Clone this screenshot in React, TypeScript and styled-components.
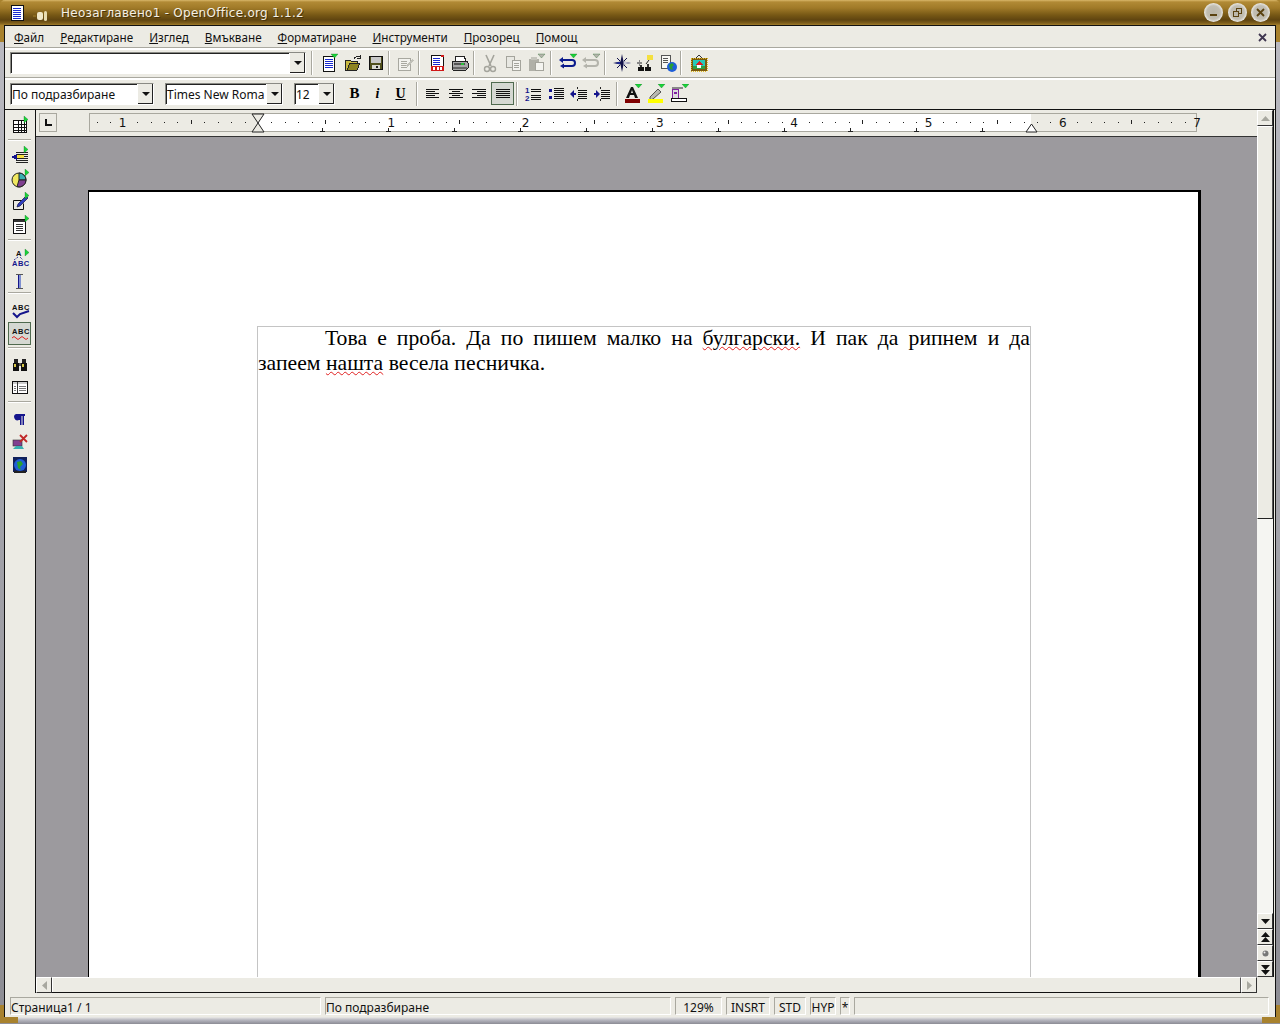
import * as React from "react";
import styled, { createGlobalStyle } from "styled-components";

const GlobalStyle = createGlobalStyle`
	html, body {
		margin: 0;
		padding: 0;
		background: #fff;
	}
	body {
		font-family: "Noto Sans", sans-serif;
		font-size: 12px;
		color: #111;
	}
`;

const FACE = "#ecebe4";
const ETCH = "#a9a89f";

const Frame = styled.div`
	width: 1280px;
	height: 1024px;
	overflow: hidden;
	position: relative;
	display: flex;
	flex-direction: column;
	background: linear-gradient(to bottom, #a8822e 0, #a8822e 42px, #b9b9c0 42px, #8d8d94 1005px, #a8822e 1005px);
`;

const TitleBar = styled.div`
	height: 25px;
	flex: none;
	display: flex;
	align-items: center;
	padding: 0 10px 0 11px;
	border-radius: 5px 5px 0 0;
	background: linear-gradient(
		to bottom,
		#d8b76a 0,
		#b18a35 2px,
		#a07a28 8px,
		#775815 15px,
		#5f4410 20px,
		#7d5e1c 23px,
		#a07c2a 25px
	);
`;

const TitleIcon = styled.span`
	width: 14px;
	height: 18px;
	display: block;
`;

const Shade = styled.span`
	width: 15px;
	height: 10px;
	margin: 0 13px 0 8px;
	display: block;
`;

const TitleText = styled.span`
	flex: 1;
	font-family: "DejaVu Sans", sans-serif;
	color: #f4f0e4;
	font-size: 12px;
	letter-spacing: 0.27px;
	text-shadow: 1px 1px 0 #4a340a;
`;

const WinButton = styled.span`
	width: 19px;
	height: 19px;
	margin-left: 4.5px;
	border-radius: 50%;
	background: radial-gradient(circle at 50% 50%, #b9b5a8 0, #c2beb2 50%, #e9e8e4 70%, #f2f2f0 85%, #a8a498 100%);
	display: flex;
	align-items: center;
	justify-content: center;
`;

const Client = styled.div`
	flex: 1;
	min-height: 0;
	margin: 0 4px 7px 4px;
	background: ${FACE};
	border: 1px solid #111;
	border-bottom: 0;
	display: flex;
	flex-direction: column;
`;

const MenuBar = styled.div`
	height: 24px;
	box-sizing: border-box;
	flex: none;
	display: flex;
	align-items: center;
	gap: 16px;
	padding: 0 8px 0 9px;
	border-bottom: 2px solid #fff;
	box-shadow: inset 0 -1px 0 ${ETCH};
`;

const MenuItem = styled.span`
	display: inline-block;
	font-size: 11.7px;
	&::first-letter {
		text-decoration: underline;
	}
`;

const MenuClose = styled.span`
	margin-left: auto;
	display: flex;
	width: 9px;
	height: 9px;
`;

const Toolbar = styled.div<{ $pb: number }>`
	height: 30px;
	box-sizing: border-box;
	flex: none;
	display: flex;
	align-items: center;
	padding: 0 0 ${p => p.$pb}px 5px;
	border-bottom: 2px solid #fff;
	box-shadow: inset 0 -1px 0 ${ETCH};
`;

const FormatBar = styled(Toolbar)`
	border-bottom: 1px solid #111;
	box-shadow: none;
`;

const Combo = styled.div<{ $w: number; $ml?: number }>`
	width: ${p => p.$w}px;
	height: 22px;
	margin-left: ${p => p.$ml || 0}px;
	box-sizing: border-box;
	flex: none;
	display: flex;
	background: #fff;
	border: 1px solid;
	border-color: #8a8a84 #fff #fff #8a8a84;
	box-shadow: inset 1px 1px 0 #222;
	font-size: 12px;
	line-height: 21px;
`;

const ComboText = styled.span`
	flex: 1;
	min-width: 0;
	padding-left: 1px;
	white-space: nowrap;
`;

const ComboButton = styled.span`
	width: 15px;
	flex: none;
	display: flex;
	align-items: center;
	justify-content: center;
	background: ${FACE};
	border-left: 1px solid #fff;
	box-shadow: inset -1px -1px 0 #222;
`;

const ArrowDown = styled.span`
	width: 0;
	height: 0;
	border-left: 4px solid transparent;
	border-right: 4px solid transparent;
	border-top: 4px solid #111;
`;

const Sep = styled.span<{ $l: number; $r: number }>`
	width: 1px;
	height: 24px;
	flex: none;
	background: ${ETCH};
	border-right: 1px solid #fff;
	margin: 0 ${p => p.$r}px 0 ${p => p.$l}px;
`;

const IconBtn = styled.span<{ $active?: boolean; $ml?: number }>`
	width: 23px;
	height: 23px;
	flex: none;
	box-sizing: border-box;
	display: flex;
	align-items: center;
	justify-content: center;
	margin-left: ${p => p.$ml || 0}px;
	${p => p.$active && `
		background: #d5d8d2;
		border: 1px solid #4f6a4f;
	`}
`;

const FormatLetter = styled.span<{ $bold?: boolean; $italic?: boolean; $under?: boolean }>`
	font-family: "Liberation Serif", serif;
	font-size: ${p => (p.$bold ? 15 : 14)}px;
	font-weight: bold;
	font-style: ${p => (p.$italic ? "italic" : "normal")};
	text-decoration: ${p => (p.$under ? "underline" : "none")};
	color: #000;
`;

const Main = styled.div`
	flex: 1;
	min-height: 0;
	display: flex;
`;

const SideBar = styled.div`
	width: 31px;
	flex: none;
	box-sizing: border-box;
	border-right: 1px solid #111;
	padding: 3px 0 0 3px;
	display: flex;
	flex-direction: column;
`;

const SideSep = styled.span<{ $t: number; $b: number }>`
	width: 23px;
	height: 1px;
	flex: none;
	background: ${ETCH};
	border-bottom: 1px solid #fff;
	margin: ${p => p.$t}px 0 ${p => p.$b}px 0;
`;

const DocArea = styled.div`
	flex: 1;
	min-width: 0;
	display: grid;
	grid-template-columns: 1221px 17px;
	grid-template-rows: 867px 16px;
`;

const DocColumn = styled.div`
	display: flex;
	flex-direction: column;
	min-height: 0;
`;

const RulerRow = styled.div`
	height: 27px;
	flex: none;
	display: flex;
	align-items: flex-start;
	padding: 3px 0 0 3px;
	box-sizing: border-box;
	border-bottom: 1px solid #333;
`;

const TabCorner = styled.span`
	width: 18px;
	height: 19px;
	flex: none;
	box-sizing: border-box;
	border: 1px solid ${ETCH};
	margin-right: 32px;
	display: flex;
	align-items: center;
	justify-content: center;
`;

const Scale = styled.div`
	position: relative;
	width: 1108px;
	height: 19px;
	box-sizing: border-box;
	border: 1px solid ${ETCH};
	background: linear-gradient(to right, ${FACE} 167px, #fff 167px, #fff 941px, ${FACE} 941px);
`;

const Dot = styled.span`
	position: absolute;
	top: 8px;
	width: 1px;
	height: 1px;
	background: #222;
`;

const HalfTick = styled.span`
	position: absolute;
	top: 6px;
	width: 1px;
	height: 4px;
	background: #222;
`;

const TabStop = styled.span`
	position: absolute;
	bottom: -1px;
	width: 5px;
	height: 4px;
	margin-left: -2px;
	background: linear-gradient(#222, #222) center top / 1px 100% no-repeat, linear-gradient(#222, #222) bottom / 100% 1px no-repeat;
`;

const RulerNumber = styled.span`
	position: absolute;
	top: 2px;
	width: 16px;
	margin-left: -9px;
	text-align: center;
	font-family: "DejaVu Sans", sans-serif;
	font-size: 12px;
	line-height: 15px;
`;

const Marker = styled.svg<{ $x: number }>`
	position: absolute;
	left: ${p => p.$x}px;
	top: -1px;
`;

const Workspace = styled.div`
	flex: 1;
	min-height: 0;
	background: #9c9a9e;
	padding: 53px 56px 0 52px;
	display: flex;
	flex-direction: column;
`;

const Page = styled.div`
	flex: 1;
	min-height: 0;
	background: #fff;
	border-top: 2px solid #000;
	border-left: 1px solid #000;
	border-right: 3px solid #000;
	padding: 134px 167px 0 168px;
	display: flex;
	flex-direction: column;
`;

const TextFrame = styled.div`
	flex: 1;
	border: 1px solid #c4c4c4;
	border-bottom: 0;
	font-family: "Liberation Serif", serif;
	font-size: 21.7px;
	line-height: 23px;
	color: #000;
	display: flex;
	flex-direction: column;
	gap: 2px;
`;

const LineOne = styled.div`
	text-align: justify;
	text-align-last: justify;
	text-indent: 67px;
	white-space: nowrap;
`;

const LineTwo = styled.div`
	white-space: nowrap;
`;

const Misspelt = styled.span`
	text-decoration: underline wavy #e02020 1px;
	text-underline-offset: 1px;
`;

const HScroll = styled.div`
	grid-column: 1;
	height: 16px;
	display: flex;
	box-sizing: border-box;
	border-bottom: 1px solid #111;
`;

const ScrollBtn = styled.span<{ $w?: number }>`
	width: ${p => p.$w || 16}px;
	height: 16px;
	flex: none;
	box-sizing: border-box;
	display: flex;
	align-items: center;
	justify-content: center;
	background: ${FACE};
	border-top: 1px solid #fff;
	border-left: 1px solid #fff;
	border-right: 1px solid #333;
	border-bottom: 1px solid #333;
`;

const HThumb = styled.span`
	flex: 1;
	box-sizing: border-box;
	background: ${FACE};
	border-top: 1px solid #fff;
	border-left: 1px solid #fff;
	border-right: 1px solid #555;
`;

const VScroll = styled.div`
	grid-column: 2;
	grid-row: 1;
	display: flex;
	flex-direction: column;
	background: #f5f5f2;
	border-right: 1px solid #111;
	box-sizing: border-box;
`;

const VThumb = styled.span`
	height: 393px;
	flex: none;
	box-sizing: border-box;
	background: ${FACE};
	border-top: 1px solid #fff;
	border-left: 1px solid #fff;
	border-bottom: 1px solid #222;
	border-right: 1px solid #555;
`;

const VTrack = styled.span`
	flex: 1;
`;

const StatusBar = styled.div`
	height: 24px;
	flex: none;
	box-sizing: border-box;
	display: flex;
	align-items: flex-start;
	gap: 4px;
	padding: 4px 6px 0 5px;
`;

const StatusCell = styled.span<{ $w?: number }>`
	flex: ${p => (p.$w ? `0 0 ${p.$w}px` : "1")};
	height: 18px;
	box-sizing: border-box;
	border: 1px solid;
	border-color: ${ETCH} #fff #fff ${ETCH};
	font-size: 12px;
	line-height: 19px;
	white-space: nowrap;
`;

const CenterCell = styled(StatusCell)`
	text-align: center;
`;

const BottomEdge = styled.div`
	position: absolute;
	left: 0;
	right: 0;
	bottom: 0;
	height: 7px;
	background: linear-gradient(to bottom, #ecebe8, #b7b7c0 3px, #8b8b94);
`;

const Corner = styled.span<{ $side: "left" | "right" }>`
	position: absolute;
	${p => p.$side}: 0;
	bottom: 1px;
	width: 18px;
	height: 6px;
	background: #a8822e;
`;

// --- icons ---

const Ico: React.FC<{ children: React.ReactNode; w?: number; h?: number; crisp?: boolean }> = ({ children, w = 20, h = 20, crisp = true }) => (
	<svg width={w} height={h} viewBox={`0 0 ${w} ${h}`} shapeRendering={crisp ? "crispEdges" : "auto"}>
		{children}
	</svg>
);

const TriDown = ({ x = 13, y = 1, c = "#19d43a" }: { x?: number; y?: number; c?: string }) => (
	<polygon points={`${x},${y} ${x + 7},${y} ${x + 3.5},${y + 4}`} fill={c} stroke="#0a5a12" strokeWidth="0.3" shapeRendering="auto" />
);

const TriRight = ({ x = 15, y = 1 }: { x?: number; y?: number }) => (
	<polygon points={`${x},${y} ${x + 4},${y + 3.5} ${x},${y + 7}`} fill="#19d43a" stroke="#0a5a12" strokeWidth="0.3" shapeRendering="auto" />
);

const Lines = ({ x, y, w, n, step = 2, c = "#111" }: { x: number; y: number; w: number; n: number; step?: number; c?: string }) => (
	<>
		{Array.from({ length: n }, (_, i) => (
			<rect key={i} x={x} y={y + i * step} width={w} height={1} fill={c} />
		))}
	</>
);

const NewIcon = () => (
	<Ico>
		<rect x="3.5" y="3.5" width="11" height="15" fill="#fff" stroke="#111" />
		<Lines x={5} y={6} w={8} n={5} step={2} c="#1a2ad0" />
		<TriDown x={11} y={1} />
	</Ico>
);

const OpenIcon = () => (
	<Ico>
		<path d="M2 7h5l1 1h6v2h3l-3 7H2z" fill="#c8b840" stroke="#222" />
		<path d="M4 17l3-7h10l-3 7z" fill="#8d8320" stroke="#222" />
		<path d="M11 6c1-3 4-3 6-2M17 2v3h-3" fill="none" stroke="#222" />
	</Ico>
);

const SaveIcon = () => (
	<Ico>
		<rect x="3.5" y="3.5" width="13" height="13" fill="#50501c" stroke="#111" />
		<rect x="5" y="4" width="10" height="6" fill="#c8c8c8" />
		<rect x="6" y="12" width="8" height="4" fill="#d8d8d0" />
		<rect x="10" y="13" width="2" height="2" fill="#222" />
	</Ico>
);

const EditIcon = () => (
	<Ico>
		<rect x="3.5" y="5.5" width="12" height="12" fill="#f2f2ee" stroke="#a8a8a0" />
		<Lines x={6} y={8} w={6} n={4} step={2} c="#a8a8a0" />
		<path d="M11 13l6-7 2 1-6 7z" fill="#c0c0b8" />
	</Ico>
);

const PdfIcon = () => (
	<Ico>
		<rect x="4.5" y="2.5" width="12" height="15" fill="#fff" stroke="#111" />
		<Lines x={6} y={5} w={7} n={4} step={2} c="#1a2ad0" />
		<rect x="4" y="13" width="13" height="5" fill="#d01818" />
		<rect x="6" y="14" width="2" height="3" fill="#fff" />
		<rect x="9.5" y="14" width="2" height="3" fill="#fff" />
		<rect x="13" y="14" width="2" height="3" fill="#fff" />
		<rect x="14" y="2" width="3" height="2" fill="#d01818" />
	</Ico>
);

const PrintIcon = () => (
	<Ico>
		<path d="M5 3h9l2 5H5z" fill="#fff" stroke="#222" />
		<path d="M2 8h15l1 2v5l-2 2H3l-1-2z" fill="#a8a8a8" stroke="#222" />
		<rect x="4" y="10" width="11" height="2" fill="#555" />
		<rect x="11" y="10" width="3" height="2" fill="#2bbf3a" />
		<rect x="3" y="14" width="14" height="2" fill="#666" />
	</Ico>
);

const CutIcon = () => (
	<Ico crisp={false}>
		<path d="M6 2l5 11M14 2L9 13" stroke="#a4a49c" strokeWidth="1.6" fill="none" />
		<circle cx="7" cy="16" r="2.5" fill="none" stroke="#a4a49c" strokeWidth="1.4" />
		<circle cx="13" cy="16" r="2.5" fill="none" stroke="#a4a49c" strokeWidth="1.4" />
	</Ico>
);

const CopyIcon = () => (
	<Ico>
		<rect x="3.5" y="3.5" width="8" height="11" fill="#e8e8e2" stroke="#a4a49c" />
		<rect x="9.5" y="7.5" width="8" height="10" fill="#f4f4f0" stroke="#a4a49c" />
		<Lines x={11} y={10} w={5} n={3} step={2} c="#a4a49c" />
	</Ico>
);

const PasteIcon = () => (
	<Ico>
		<path d="M3 6h10v12H3z" fill="#b0b0a8" />
		<rect x="5" y="4" width="6" height="3" fill="#c4c4bc" />
		<rect x="9.5" y="9.5" width="8" height="8" fill="#f4f4f0" stroke="#a4a49c" />
		<TriDown x={12} y={1} c="#b4b4ac" />
	</Ico>
);

const NavArrows = ({ c, tri }: { c: string; tri: string }) => (
	<Ico crisp={false}>
		<path d="M3 7h11a2.5 2.5 0 0 1 0 6H5" fill="none" stroke={c} strokeWidth="2" />
		<polygon points="1,7 5,4 5,10" fill={c} />
		<polygon points="2,13 6,10.5 6,15.5" fill={c} />
		<TriDown x={12} y={1} c={tri} />
	</Ico>
);

const NavigatorIcon = () => (
	<Ico crisp={false}>
		<path d="M10 1l1.5 7.5L19 10l-7.5 1.5L10 19l-1.5-7.5L1 10l7.5-1.5z" fill="#12124a" />
		<path d="M11.5 8.5L19 10l-7.5 1.5z" fill="#c8c8d8" />
		<path d="M3 10l5-1v2z" fill="#2030b0" />
		<path d="M5 5l3 3M15 15l-3-3M15 5l-3 3M5 15l3-3" stroke="#12124a" strokeWidth="1" />
	</Ico>
);

const AgentIcon = () => (
	<Ico>
		<rect x="2" y="9" width="5" height="2" fill="#888" />
		<rect x="4" y="7" width="1" height="6" fill="#888" />
		<rect x="12" y="2" width="6" height="5" fill="#f4e040" />
		<path d="M14 7l-3 4" stroke="#222" fill="none" shapeRendering="auto" />
		<rect x="3" y="14" width="6" height="4" fill="#111" />
		<rect x="10" y="14" width="6" height="4" fill="#111" />
		<rect x="5" y="12" width="2" height="2" fill="#333" />
		<rect x="12" y="11" width="2" height="3" fill="#333" />
	</Ico>
);

const GlobeDocIcon = () => (
	<Ico>
		<rect x="3.5" y="2.5" width="9" height="13" fill="#f8f8f4" stroke="#555" />
		<Lines x={5} y={5} w={5} n={3} step={2} c="#555" />
		<circle cx="14" cy="14" r="5" fill="#1e5ed8" shapeRendering="auto" />
		<path d="M11 12l3-2 2 2-2 2 1 3-3-1z" fill="#28a030" shapeRendering="auto" />
	</Ico>
);

const GalleryIcon = () => (
	<Ico>
		<rect x="2" y="5" width="16" height="13" fill="#7a5a10" />
		<rect x="2" y="5" width="16" height="13" fill="none" stroke="#e0b820" strokeDasharray="1 1" />
		<rect x="4" y="7" width="12" height="9" fill="#28c8b8" />
		<rect x="4" y="13" width="12" height="3" fill="#30a040" />
		<polygon points="10,8 14,12 6,12" fill="#d82020" />
		<rect x="8" y="12" width="4" height="3" fill="#fff" />
		<path d="M7 5l3-3 3 3" fill="none" stroke="#333" shapeRendering="auto" />
	</Ico>
);

const AlignIcon = ({ rows }: { rows: [number, number][] }) => (
	<Ico>
		{rows.map(([x, w], i) => (
			<rect key={i} x={x} y={5 + i * 2} width={w} height={1} fill="#111" />
		))}
	</Ico>
);

const ALIGN_LEFT: [number, number][] = [[3, 13], [3, 9], [3, 13], [3, 9], [3, 13]];
const ALIGN_CENTER: [number, number][] = [[3, 14], [6, 8], [3, 14], [6, 8], [3, 14]];
const ALIGN_RIGHT: [number, number][] = [[3, 14], [8, 9], [3, 14], [8, 9], [3, 14]];
const ALIGN_FULL: [number, number][] = [[3, 14], [3, 14], [3, 14], [3, 14], [3, 14]];

const NumberingIcon = () => (
	<Ico>
		<text x="2" y="9" fontSize="8" fontWeight="bold" fill="#15158c" fontFamily="Liberation Sans, sans-serif">1</text>
		<text x="2" y="17" fontSize="8" fontWeight="bold" fill="#15158c" fontFamily="Liberation Sans, sans-serif">2</text>
		<Lines x={8} y={5} w={10} n={2} step={2} />
		<Lines x={8} y={11} w={10} n={3} step={2} />
	</Ico>
);

const BulletIcon = () => (
	<Ico>
		<rect x="3" y="5" width="3" height="3" fill="#15158c" />
		<rect x="3" y="12" width="3" height="3" fill="#15158c" />
		<Lines x={8} y={4} w={10} n={6} step={2} />
	</Ico>
);

const IndentIcon = ({ right }: { right?: boolean }) => (
	<Ico>
		<rect x="2" y="9" width="5" height="2" fill="#15158c" />
		<polygon points={right ? "8,10 4,6 4,14" : "1,10 5,6 5,14"} fill="#15158c" shapeRendering="auto" />
		<Lines x={9} y={6} w={9} n={5} step={2} />
		<rect x="8" y="3" width="1" height="2" fill="#222" />
		<rect x="8" y="15" width="1" height="2" fill="#222" />
	</Ico>
);

const FontColorIcon = () => (
	<Ico>
		<path d="M3 14L8 3h2l5 11h-3l-1-3H7l-1 3zM8 9h2L9 6z" fill="#111" fillRule="evenodd" shapeRendering="auto" />
		<rect x="2" y="15" width="15" height="4" fill="#7f0000" />
		<TriDown x={12} y={0} />
	</Ico>
);

const HighlightIcon = () => (
	<Ico crisp={false}>
		<path d="M4 13l8-8 3 3-8 7-3 1z" fill="#b8b8b0" stroke="#333" strokeWidth="0.8" />
		<rect x="2" y="15" width="15" height="4" fill="#ffff00" />
		<TriDown x={12} y={0} />
	</Ico>
);

const BackgroundIcon = () => (
	<Ico>
		<rect x="3.5" y="5.5" width="6" height="9" fill="#ddd" stroke="#8020a0" />
		<rect x="5" y="8" width="3" height="2" fill="#8020a0" />
		<rect x="3" y="3" width="11" height="2" fill="#888" />
		<rect x="2.5" y="14.5" width="15" height="3" fill="#fff" stroke="#111" />
		<TriDown x={13} y={0} />
	</Ico>
);

const TableIcon = () => (
	<Ico>
		<rect x="3.5" y="5.5" width="13" height="12" fill="#fff" stroke="#111" />
		{[7.5, 10.5, 13.5].map(x => <rect key={x} x={x} y={5} width={1} height={12} fill="#111" />)}
		{[8.5, 11.5, 14.5].map(y => <rect key={y} x={3} y={y} width={13} height={1} fill="#111" />)}
		<TriRight x={14} y={1} />
	</Ico>
);

const FieldIcon = () => (
	<Ico>
		<Lines x={6} y={6} w={12} n={6} step={2} c="#222" />
		<rect x="7" y="9" width="7" height="3" fill="#f4e040" />
		<polygon points="1,11 7,8 7,14" fill="#15158c" />
		<TriRight x={14} y={0} />
	</Ico>
);

const ShapesIcon = () => (
	<Ico crisp={false}>
		<circle cx="9" cy="11" r="7" fill="#f0e860" stroke="#222" />
		<path d="M9 11V4a7 7 0 0 1 7 7z" fill="#38b0b0" stroke="#222" />
		<path d="M9 11h7a7 7 0 0 1-9 6.7z" fill="#804090" stroke="#222" />
		<TriRight x={15} y={0} />
	</Ico>
);

const DrawIcon = () => (
	<Ico crisp={false}>
		<path d="M3.5 8.5h8M3.5 8.5v9h10v-6" fill="none" stroke="#111" />
		<path d="M7 15l1-3 8-8 2 2-8 8z" fill="#3040c0" stroke="#12124a" strokeWidth="0.7" />
		<TriRight x={15} y={0} />
	</Ico>
);

const FormIcon = () => (
	<Ico>
		<rect x="3.5" y="4.5" width="12" height="14" fill="#fff" stroke="#111" />
		<rect x="4" y="5" width="11" height="2" fill="#333" />
		<Lines x={6} y={9} w={7} n={4} step={2} c="#333" />
		<TriRight x={15} y={0} />
	</Ico>
);

const MicroText = styled.text`
	font-family: "Liberation Sans", sans-serif;
	font-weight: bold;
	font-size: 7.5px;
`;

const AutoTextIcon = () => (
	<Ico crisp={false}>
		<MicroText x="6" y="8" fill="#111">A</MicroText>
		<MicroText x="2" y="18" fill="#15158c" letterSpacing="0.5">ABC</MicroText>
		<path d="M8 9L4 12M10 9l3 3" stroke="#15158c" strokeDasharray="1 1" fill="none" />
		<TriRight x={15} y={1} />
	</Ico>
);

const CursorIcon = () => (
	<Ico>
		<rect x="6" y="3" width="7" height="1" fill="#555" />
		<rect x="6" y="17" width="7" height="1" fill="#555" />
		<rect x="8" y="4" width="3" height="13" fill="#8090d0" />
		<rect x="8" y="4" width="1" height="13" fill="#15158c" />
	</Ico>
);

const SpellIcon = () => (
	<Ico crisp={false}>
		<MicroText x="2" y="9" fill="#111" letterSpacing="0.6">ABC</MicroText>
		<path d="M3 12l4 4 3-3c3-1 6-2 9-3" fill="none" stroke="#15158c" strokeWidth="2" />
	</Ico>
);

const AutoSpellIcon = () => (
	<Ico crisp={false}>
		<MicroText x="2" y="10" fill="#111" letterSpacing="0.6">ABC</MicroText>
		<path d="M2 14q2-3 4 0t4 0t4 0t4 0" fill="none" stroke="#e02020" />
	</Ico>
);

const FindIcon = () => (
	<Ico>
		<rect x="3" y="9" width="6" height="8" fill="#111" />
		<rect x="11" y="9" width="6" height="8" fill="#111" />
		<rect x="4" y="5" width="4" height="4" fill="#222" />
		<rect x="12" y="5" width="4" height="4" fill="#222" />
		<rect x="9" y="9" width="2" height="3" fill="#555" />
		<rect x="4" y="10" width="2" height="3" fill="#d8c848" />
		<rect x="12" y="10" width="2" height="3" fill="#d8c848" />
	</Ico>
);

const DataIcon = () => (
	<Ico>
		<rect x="2.5" y="4.5" width="15" height="12" fill="#fff" stroke="#111" />
		<rect x="3" y="5" width="14" height="2" fill="#ccc" />
		<rect x="7" y="5" width="1" height="11" fill="#333" />
		<Lines x={9} y={9} w={7} n={3} step={2} c="#777" />
		<Lines x={4} y={9} w={2} n={3} step={2} c="#777" />
	</Ico>
);

const ParaIcon = () => (
	<Ico>
		<path d="M6 5h9v2h-1v9h-1.5V7h-1v9H10v-5H9a3 3 0 0 1-3-6z" fill="#15158c" shapeRendering="auto" />
	</Ico>
);

const GraphicsOffIcon = () => (
	<Ico crisp={false}>
		<rect x="3" y="8" width="9" height="6" fill="#804090" stroke="#333" strokeWidth="0.6" />
		<path d="M3 17h11l-2-3H6z" fill="#38b0b0" />
		<path d="M10 3l7 7M17 3l-7 7" stroke="#c02828" strokeWidth="1.8" />
	</Ico>
);

const WebIcon = () => (
	<Ico>
		<rect x="3" y="2" width="14" height="15" rx="1" fill="#10205a" />
		<circle cx="10" cy="10" r="6" fill="#1e5ed8" shapeRendering="auto" />
		<path d="M7 7l4-1 2 3-3 3 1 3-3-2z" fill="#28a030" shapeRendering="auto" />
		<rect x="4" y="16" width="12" height="2" fill="#222" />
	</Ico>
);

const Glyph = ({ kind, c = "#111" }: { kind: "up" | "down" | "left" | "right" | "pgup" | "pgdn"; c?: string }) => (
	<svg width="11" height="11" viewBox="0 0 11 11">
		{kind === "up" && <polygon points="5.5,3 10,8 1,8" fill={c} />}
		{kind === "down" && <polygon points="1,3 10,3 5.5,8" fill={c} />}
		{kind === "left" && <polygon points="3,5.5 8,1 8,10" fill={c} />}
		{kind === "right" && <polygon points="8,5.5 3,1 3,10" fill={c} />}
		{kind === "pgup" && <path d="M5.5 0L10 5H1zM5.5 5L10 10H1z" fill={c} />}
		{kind === "pgdn" && <path d="M1 1h9L5.5 6zM1 6h9L5.5 11z" fill={c} />}
	</svg>
);

const MENU = ["Файл", "Редактиране", "Изглед", "Вмъкване", "Форматиране", "Инструменти", "Прозорец", "Помощ"];

const INCH = 13.43;
const ORIGIN = 168;

// what sits on the ruler: positions are the content of the ruler itself
const RulerMarks = () => {
	const marks: React.ReactNode[] = [];
	for (let i = -12; i <= 70; i++) {
		const x = ORIGIN + i * INCH;
		if (i === 0) continue;
		if (i % 10 === 0) {
			marks.push(<RulerNumber key={i} style={{ left: x }}>{Math.abs(i / 10)}</RulerNumber>);
		} else if (i % 5 === 0) {
			marks.push(<HalfTick key={i} style={{ left: x }} />);
		} else {
			marks.push(<Dot key={i} style={{ left: x }} />);
		}
	}
	for (let i = 1; i <= 11; i++) {
		marks.push(<TabStop key={`t${i}`} style={{ left: ORIGIN - 2 + i * 66 }} />);
	}
	return <>{marks}</>;
};

const App = () => (
	<>
		<GlobalStyle />
		<Frame>
			<TitleBar>
				<TitleIcon>
					<svg width="14" height="18" viewBox="0 0 14 18" shapeRendering="crispEdges">
						<rect x="0.5" y="1.5" width="12" height="15" fill="#fff" stroke="#111" />
						<Lines x={2} y={4} w={8} n={6} step={2} c="#1a2ad0" />
					</svg>
				</TitleIcon>
				<Shade>
					<svg width="15" height="10" viewBox="0 0 15 10">
						<rect x="0" y="4" width="3" height="2" fill="#8a6a20" />
						<rect x="4" y="1" width="6" height="8" rx="2" fill="#f0e8c8" />
						<rect x="11" y="0" width="3" height="10" rx="1.5" fill="#e8dcb0" />
					</svg>
				</Shade>
				<TitleText>Неозаглавено1 - OpenOffice.org 1.1.2</TitleText>
				<WinButton>
					<svg width="11" height="11" viewBox="0 0 11 11"><rect x="2" y="7" width="7" height="2" fill="#5a4210" /></svg>
				</WinButton>
				<WinButton>
					<svg width="11" height="11" viewBox="0 0 11 11" fill="none" stroke="#5a4210" shapeRendering="crispEdges"><rect x="1.5" y="4.5" width="5" height="5" /><path d="M4.5 4V1.5h5v5H7" /></svg>
				</WinButton>
				<WinButton>
					<svg width="11" height="11" viewBox="0 0 11 11"><path d="M2 2l7 7M9 2L2 9" stroke="#5a4210" strokeWidth="1.8" /></svg>
				</WinButton>
			</TitleBar>
			<Client>
				<MenuBar>
					{MENU.map(m => <MenuItem key={m}>{m}</MenuItem>)}
					<MenuClose>
						<svg width="9" height="9" viewBox="0 0 9 9"><path d="M1 1l7 7M8 1L1 8" stroke="#3f3650" strokeWidth="1.8" /></svg>
					</MenuClose>
				</MenuBar>
				<Toolbar $pb={2}>
					<Combo $w={296}>
						<ComboText />
						<ComboButton><ArrowDown /></ComboButton>
					</Combo>
					<Sep $l={5} $r={5} />
					<IconBtn><NewIcon /></IconBtn>
					<IconBtn><OpenIcon /></IconBtn>
					<IconBtn><SaveIcon /></IconBtn>
					<Sep $l={1} $r={3} />
					<IconBtn><EditIcon /></IconBtn>
					<Sep $l={2} $r={5} />
					<IconBtn><PdfIcon /></IconBtn>
					<IconBtn><PrintIcon /></IconBtn>
					<Sep $l={2} $r={3} />
					<IconBtn><CutIcon /></IconBtn>
					<IconBtn><CopyIcon /></IconBtn>
					<IconBtn><PasteIcon /></IconBtn>
					<Sep $l={3} $r={4} />
					<IconBtn><NavArrows c="#0a1a8c" tri="#19d43a" /></IconBtn>
					<IconBtn><NavArrows c="#b4b4ac" tri="#b4b4ac" /></IconBtn>
					<Sep $l={2} $r={4} />
					<IconBtn><NavigatorIcon /></IconBtn>
					<IconBtn><AgentIcon /></IconBtn>
					<IconBtn><GlobeDocIcon /></IconBtn>
					<Sep $l={1} $r={5} />
					<IconBtn><GalleryIcon /></IconBtn>
				</Toolbar>
				<FormatBar $pb={2}>
					<Combo $w={144}>
						<ComboText>По подразбиране</ComboText>
						<ComboButton><ArrowDown /></ComboButton>
					</Combo>
					<Combo $w={118} $ml={11}>
						<ComboText>Times New Roma</ComboText>
						<ComboButton><ArrowDown /></ComboButton>
					</Combo>
					<Combo $w={41} $ml={11}>
						<ComboText>12</ComboText>
						<ComboButton><ArrowDown /></ComboButton>
					</Combo>
					<IconBtn $ml={8}><FormatLetter $bold>B</FormatLetter></IconBtn>
					<IconBtn><FormatLetter $italic>i</FormatLetter></IconBtn>
					<IconBtn><FormatLetter $under>U</FormatLetter></IconBtn>
					<Sep $l={4} $r={3} />
					<IconBtn><AlignIcon rows={ALIGN_LEFT} /></IconBtn>
					<IconBtn><AlignIcon rows={ALIGN_CENTER} /></IconBtn>
					<IconBtn><AlignIcon rows={ALIGN_RIGHT} /></IconBtn>
					<IconBtn $active $ml={1}><AlignIcon rows={ALIGN_FULL} /></IconBtn>
					<Sep $l={2} $r={3} />
					<IconBtn><NumberingIcon /></IconBtn>
					<IconBtn><BulletIcon /></IconBtn>
					<IconBtn><IndentIcon /></IconBtn>
					<IconBtn><IndentIcon right /></IconBtn>
					<Sep $l={3} $r={3} />
					<IconBtn><FontColorIcon /></IconBtn>
					<IconBtn><HighlightIcon /></IconBtn>
					<IconBtn><BackgroundIcon /></IconBtn>
				</FormatBar>
				<Main>
					<SideBar>
						<IconBtn><TableIcon /></IconBtn>
						<SideSep $t={3} $b={3} />
						<IconBtn><FieldIcon /></IconBtn>
						<IconBtn><ShapesIcon /></IconBtn>
						<IconBtn><DrawIcon /></IconBtn>
						<IconBtn><FormIcon /></IconBtn>
						<SideSep $t={3} $b={5} />
						<IconBtn><AutoTextIcon /></IconBtn>
						<IconBtn><CursorIcon /></IconBtn>
						<SideSep $t={0} $b={5} />
						<IconBtn><SpellIcon /></IconBtn>
						<IconBtn $active><AutoSpellIcon /></IconBtn>
						<SideSep $t={2} $b={3} />
						<IconBtn><FindIcon /></IconBtn>
						<IconBtn><DataIcon /></IconBtn>
						<SideSep $t={3} $b={4} />
						<IconBtn><ParaIcon /></IconBtn>
						<IconBtn><GraphicsOffIcon /></IconBtn>
						<IconBtn><WebIcon /></IconBtn>
					</SideBar>
					<DocArea>
						<DocColumn>
							<RulerRow>
								<TabCorner>
									<svg width="10" height="10" viewBox="0 0 10 10" shapeRendering="crispEdges"><path d="M2 1h2v5h5v2H2z" fill="#111" /></svg>
								</TabCorner>
								<Scale>
									<RulerMarks />
									<Marker $x={161} width="14" height="20" viewBox="0 0 14 20">
										<path d="M1 1h12L7 10l6 9H1l6-9z" fill="#ecebe4" stroke="#222" />
									</Marker>
									<Marker $x={935} width="13" height="20" viewBox="0 0 13 20">
										<path d="M6.5 11L12 19H1z" fill="#fff" stroke="#222" />
									</Marker>
								</Scale>
							</RulerRow>
							<Workspace>
								<Page>
									<TextFrame>
										<LineOne>Това е проба. Да по пишем малко на <Misspelt>булгарски.</Misspelt> И пак да рипнем и да</LineOne>
										<LineTwo>запеем <Misspelt>нашта</Misspelt> весела песничка.</LineTwo>
									</TextFrame>
								</Page>
							</Workspace>
						</DocColumn>
						<VScroll>
							<ScrollBtn><Glyph kind="up" c="#a8a8a0" /></ScrollBtn>
							<VThumb />
							<VTrack />
							<ScrollBtn><Glyph kind="down" /></ScrollBtn>
							<ScrollBtn><Glyph kind="pgup" /></ScrollBtn>
							<ScrollBtn>
								<svg width="9" height="9" viewBox="0 0 9 9"><circle cx="4.5" cy="4.5" r="3" fill="#777" /><circle cx="3.5" cy="3.5" r="1" fill="#eee" /></svg>
							</ScrollBtn>
							<ScrollBtn><Glyph kind="pgdn" /></ScrollBtn>
						</VScroll>
						<HScroll>
							<ScrollBtn><Glyph kind="left" c="#a8a8a0" /></ScrollBtn>
							<HThumb />
							<ScrollBtn><Glyph kind="right" c="#a8a8a0" /></ScrollBtn>
						</HScroll>
					</DocArea>
				</Main>
				<StatusBar>
					<StatusCell $w={311}>Страница1 / 1</StatusCell>
					<StatusCell $w={346}>По подразбиране</StatusCell>
					<CenterCell $w={47}>129%</CenterCell>
					<CenterCell $w={44}>INSRT</CenterCell>
					<CenterCell $w={32}>STD</CenterCell>
					<CenterCell $w={26}>HYP</CenterCell>
					<CenterCell $w={10}>*</CenterCell>
					<StatusCell />
				</StatusBar>
			</Client>
			<BottomEdge />
			<Corner $side="left" />
			<Corner $side="right" />
		</Frame>
	</>
);

export default App;
